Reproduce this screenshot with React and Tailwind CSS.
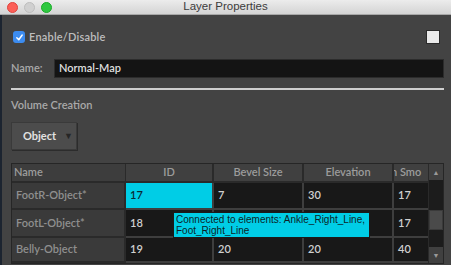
import React from "react";

const ui = { fontFamily: '"Lato", "Open Sans", sans-serif' };
const helv = { fontFamily: '"Liberation Sans", Arial, sans-serif' };

const rows = [
  { name: "FootR-Object*", id: "17", bevel: "7", elev: "30", smo: "17", h: "h-[27px]", selected: true },
  { name: "FootL-Object*", id: "18", bevel: "", elev: "", smo: "17", h: "h-[28px]" },
  { name: "Belly-Object", id: "19", bevel: "20", elev: "20", smo: "40", h: "h-[25px]" },
];

function TrafficLights() {
  return (
    <div className="absolute left-[7px] top-[2px] flex gap-[6px]">
      <div className="w-[11px] h-[11px] rounded-full bg-[#fc5f57] border border-[#e0443e]" />
      <div className="w-[11px] h-[11px] rounded-full bg-[#d0d0d0] border border-[#bdbdbd]" />
      <div className="w-[11px] h-[11px] rounded-full bg-[#2fc840] border border-[#1aab29]" />
    </div>
  );
}

export default function App() {
  return (
    <div className="w-[451px] h-[265px] overflow-hidden flex flex-col bg-[#434343]" style={ui}>
      {/* title bar */}
      <div className="relative h-[15px] shrink-0 bg-gradient-to-b from-[#ececec] to-[#d4d4d4] border-b border-[#a8a8a8] flex items-center justify-center">
        <TrafficLights />
        <span className="text-[11.5px] leading-none text-[#3c3c3c]" style={helv}>
          Layer Properties
        </span>
      </div>

      <div className="flex flex-1 min-h-0">
        <div className="w-[2px] bg-[#1c2430] shrink-0" />
        <div className="flex-1 pl-[9px] pr-[8px] flex flex-col">
          {/* enable row */}
          <div className="flex items-center justify-between mt-[15px] h-[14px]">
            <div className="flex items-center gap-[4px] ml-[2px]">
              <div className="w-[12px] h-[12px] rounded-[3px] bg-[#3c8cf0] flex items-center justify-center">
                <svg width="9" height="9" viewBox="0 0 10 10">
                  <path d="M2 5.2 L4.2 7.5 L8 2.2" stroke="white" strokeWidth="1.6" fill="none" strokeLinecap="round" strokeLinejoin="round" />
                </svg>
              </div>
              <span className="text-[11px] font-semibold text-[#bdbdbd] tracking-[0.2px]">Enable/Disable</span>
            </div>
            <div className="w-[14px] h-[14px] bg-[#e9e9e9] border border-[#2a2a2a] mr-[4px]" />
          </div>

          {/* name row */}
          <div className="flex items-center mt-[15px] h-[19px]">
            <span className="w-[43px] text-[11px] font-semibold text-[#a9a9a9]">Name:</span>
            <div className="flex-1 h-full bg-[#141414] border border-[#2c2c2c] flex items-center pl-[4px]">
              <span className="text-[11px] font-semibold text-[#dedede]">Normal-Map</span>
            </div>
          </div>

          <div className="mt-[10px] h-[2px] bg-[#cfcfcf]" />

          <div className="mt-[8px] text-[11px] font-semibold text-[#a9a9a9] leading-[14px]">Volume Creation</div>

          {/* object button */}
          <div className="mt-[10px] w-[66px] h-[28px] bg-[#4c4c4c] border border-[#3a3a3a] shadow-[1px_1px_0_#2c2c2c] flex items-center pl-[11px] pr-[3px] justify-between">
            <span className="text-[11px] font-bold text-[#e2e2e2]">Object</span>
            <span className="text-[9px] text-[#262626]">▼</span>
          </div>

          {/* table */}
          <div className="relative mt-[13px] flex border border-[#262626] w-[433px]">
            <div className="flex flex-col">
              <div className="flex h-[19px] bg-[#3d3d3d] text-[11px] font-semibold text-[#9c9c9c]">
                <div className="w-[114px] flex items-center pl-[2px] border-r border-b-2 border-[#2a2a2a]">Name</div>
                <div className="w-[88px] flex items-center justify-center border-r-2 border-b-2 border-[#2a2a2a] bg-[#404040]">ID</div>
                <div className="w-[90px] flex items-center justify-center border-r-2 border-b-2 border-[#2a2a2a] bg-[#404040]">Bevel Size</div>
                <div className="w-[90px] flex items-center justify-center border-r-2 border-b-2 border-[#2a2a2a] bg-[#404040]">Elevation</div>
                <div className="w-[34px] flex items-center overflow-hidden whitespace-nowrap border-b-2 border-[#2a2a2a] bg-[#404040]">
                  <span className="ml-[-3px]">n Smo</span>
                </div>
              </div>
              {rows.map((r) => (
                <div key={r.name} className={`flex ${r.h} text-[11px] font-semibold`}>
                  <div className="w-[114px] flex items-center pl-[4px] bg-[#3a3a3a] text-[#8f8f8f] border-r-2 border-b-2 border-[#2a2a2a]">
                    {r.name}
                  </div>
                  <div
                    className={`w-[88px] flex items-center pl-[4px] border-r-2 border-b-2 border-[#3e3e3e] ${
                      r.selected ? "bg-[#00cde6] text-[#0d2a33]" : "bg-[#181818] text-[#d0d0d0]"
                    }`}
                  >
                    {r.id}
                  </div>
                  <div className="w-[90px] flex items-center pl-[4px] bg-[#181818] text-[#d0d0d0] border-r-2 border-b-2 border-[#3e3e3e]">{r.bevel}</div>
                  <div className="w-[90px] flex items-center pl-[4px] bg-[#181818] text-[#d0d0d0] border-r-2 border-b-2 border-[#3e3e3e]">{r.elev}</div>
                  <div className="w-[34px] flex items-center pl-[4px] bg-[#181818] text-[#d0d0d0] border-b-2 border-[#3e3e3e]">{r.smo}</div>
                </div>
              ))}
            </div>

            {/* scrollbar */}
            <div className="w-[15px] flex flex-col bg-[#1c1c1c] border-l border-[#2a2a2a]">
              <div className="h-[16px] bg-[#404040] flex items-center justify-center">
                <span className="text-[7px] text-[#9a9a9a]">▲</span>
              </div>
              <div className="flex-1 flex flex-col">
                <div className="h-[30px]" />
                <div className="h-[20px] bg-[#4a4a4a] border border-[#3a3a3a]" />
              </div>
              <div className="h-[16px] bg-[#404040] flex items-center justify-center">
                <span className="text-[7px] text-[#9a9a9a]">▼</span>
              </div>
            </div>

            {/* tooltip */}
            <div
              className="absolute left-[161px] top-[48px] whitespace-nowrap bg-[#00cde6] border border-[#1a1a1a] pl-[2px] pr-[4px] py-[1px] text-[10px] leading-[11px] text-[#0c1f26]"
              style={helv}
            >
              Connected to elements: Ankle_Right_Line,
              <br />
              Foot_Right_Line
            </div>
          </div>
        </div>
      </div>
    </div>
  );
}
